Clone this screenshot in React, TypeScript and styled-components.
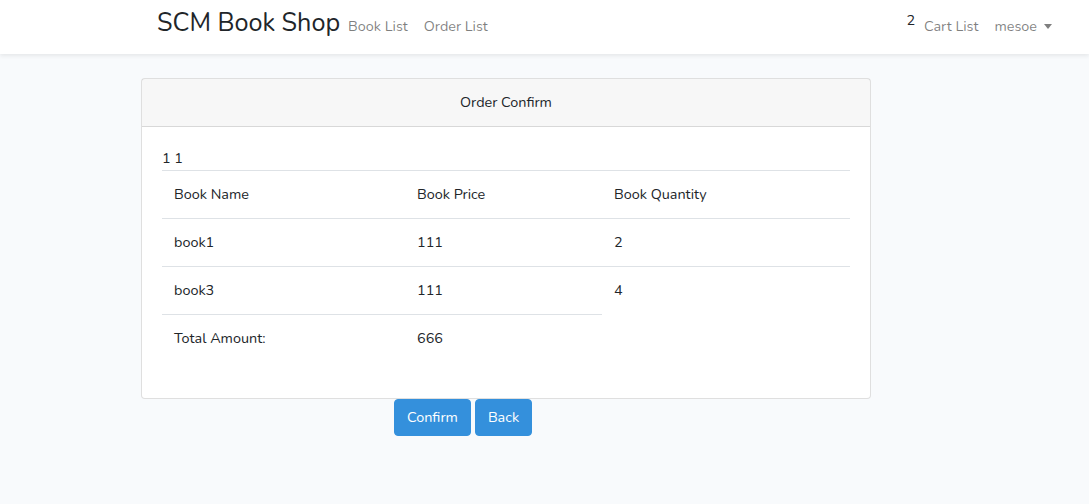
import React from 'react';
import styled, { createGlobalStyle } from 'styled-components';

const GlobalStyle = createGlobalStyle`
    html, body {
        margin: 0;
        padding: 0;
    }
    body {
        background: #f8fafc;
        font-family: Nunito, "Open Sans", sans-serif;
        font-size: 14.4px;
        line-height: 1.6;
        color: #212529;
    }
`;

const NavBar = styled.nav`
    height: 54px;
    background: #fff;
    box-shadow: 0 2px 4px rgba(0, 0, 0, 0.075);
    display: flex;
    align-items: center;
    padding: 0 29px 0 157px;
    box-sizing: border-box;
`;
const Brand = styled.a`
    font-size: 25.2px;
    line-height: 1;
    color: #212529;
    margin-top: -6px;
`;
const NavGroup = styled.div<{ $right?: boolean }>`
    display: flex;
    align-items: center;
    margin-left: ${(p) => (p.$right ? 'auto' : '0')};
`;
const NavLink = styled.a`
    color: rgba(0, 0, 0, 0.5);
    padding: 0 8px;
    display: flex;
    align-items: center;
`;
const Badge = styled.span`
    color: #212529;
    font-size: 14.4px;
    margin-top: -12px;
    margin-right: 9px;
`;
const Caret = styled.span`
    display: inline-block;
    margin-left: 7px;
    border-top: 5px solid rgba(0, 0, 0, 0.5);
    border-left: 4.5px solid transparent;
    border-right: 4.5px solid transparent;
`;

const Main = styled.main`
    padding: 24px 0 0 141px;
`;
const Card = styled.div`
    width: 730px;
    box-sizing: border-box;
    background: #fff;
    border: 1px solid rgba(0, 0, 0, 0.125);
    border-radius: 4px;
`;
const CardHeader = styled.div`
    padding: 12px 20px;
    background: rgba(0, 0, 0, 0.03);
    border-bottom: 1px solid rgba(0, 0, 0, 0.125);
    text-align: center;
`;
const CardBody = styled.div`
    padding: 20px;
`;
const Table = styled.table`
    width: 100%;
    table-layout: fixed;
    border-collapse: collapse;
    margin-bottom: 16px;
`;
const Cell = styled.td<{ $width?: string }>`
    box-sizing: border-box;
    padding: 12px;
    border-top: 1px solid #dee2e6;
    vertical-align: top;
    text-align: left;
    width: ${(p) => p.$width || 'auto'};
`;
const Actions = styled.div`
    display: flex;
    gap: 4px;
    padding-left: 253px;
`;
const Button = styled.button`
    font-family: inherit;
    font-size: 14.4px;
    line-height: 1.6;
    padding: 6px 12px;
    color: #fff;
    background: #3490dc;
    border: 1px solid #3490dc;
    border-radius: 4px;
`;

const rows = [
    { name: 'book1', price: 111, qty: 2 },
    { name: 'book3', price: 111, qty: 4 },
];

export default function App() {
    return (
        <>
            <GlobalStyle />
            <NavBar>
                <Brand>SCM Book Shop</Brand>
                <NavGroup>
                    <NavLink>Book List</NavLink>
                    <NavLink>Order List</NavLink>
                </NavGroup>
                <NavGroup $right>
                    <NavLink>
                        <Badge>2</Badge>
                        Cart List
                    </NavLink>
                    <NavLink>
                        mesoe
                        <Caret />
                    </NavLink>
                </NavGroup>
            </NavBar>
            <Main>
                <Card>
                    <CardHeader>Order Confirm</CardHeader>
                    <CardBody>
                        <div>1 1</div>
                        <Table>
                            <tbody>
                                <tr>
                                    <Cell $width="243px">Book Name</Cell>
                                    <Cell $width="197px">Book Price</Cell>
                                    <Cell>Book Quantity</Cell>
                                </tr>
                                {rows.map((row, index) => (
                                    <tr key={`${row.name}-${index}`}>
                                        <Cell>{row.name}</Cell>
                                        <Cell>{row.price}</Cell>
                                        <Cell>{row.qty}</Cell>
                                    </tr>
                                ))}
                                <tr>
                                    <Cell>Total Amount:</Cell>
                                    <Cell>666</Cell>
                                </tr>
                            </tbody>
                        </Table>
                    </CardBody>
                </Card>
                <Actions>
                    <Button>Confirm</Button>
                    <Button>Back</Button>
                </Actions>
            </Main>
        </>
    );
}
